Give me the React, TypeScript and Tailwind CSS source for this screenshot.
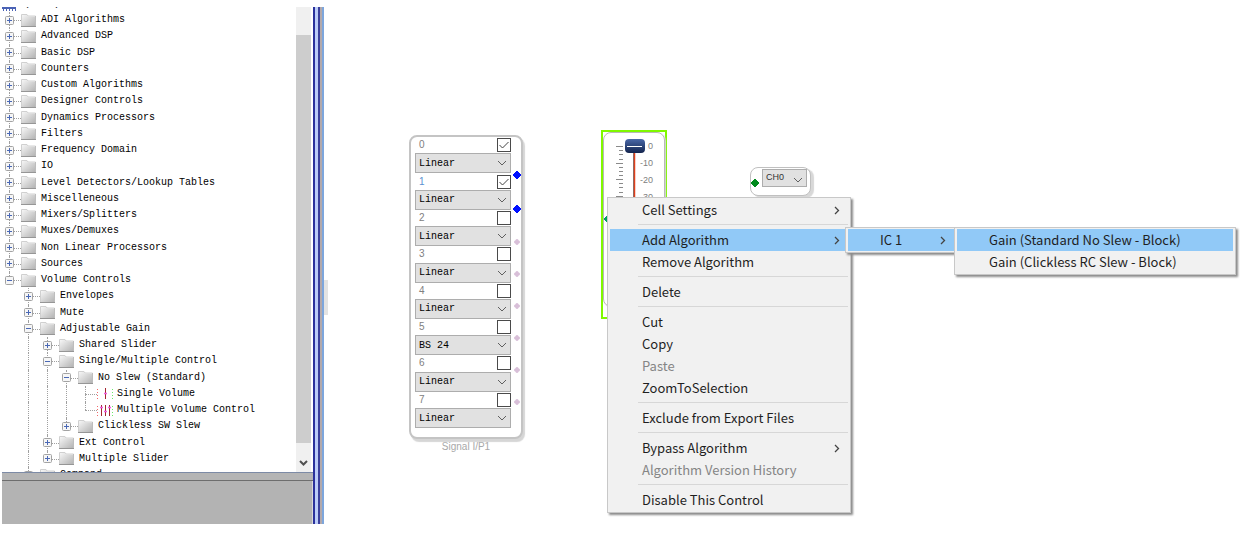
import { useState } from 'react';
import type { ReactNode } from 'react';

type TreeItem = {
  label: string;
  depth: number;
  open?: boolean;
  icon?: 'single' | 'multiple';
  // outer levels whose vertical line passes through this row
  guides?: number[];
  last?: boolean;
};

const items: TreeItem[] = [
  { label: 'ADI Algorithms', depth: 0 },
  { label: 'Advanced DSP', depth: 0 },
  { label: 'Basic DSP', depth: 0 },
  { label: 'Counters', depth: 0 },
  { label: 'Custom Algorithms', depth: 0 },
  { label: 'Designer Controls', depth: 0 },
  { label: 'Dynamics Processors', depth: 0 },
  { label: 'Filters', depth: 0 },
  { label: 'Frequency Domain', depth: 0 },
  { label: 'IO', depth: 0 },
  { label: 'Level Detectors/Lookup Tables', depth: 0 },
  { label: 'Miscelleneous', depth: 0 },
  { label: 'Mixers/Splitters', depth: 0 },
  { label: 'Muxes/Demuxes', depth: 0 },
  { label: 'Non Linear Processors', depth: 0 },
  { label: 'Sources', depth: 0 },
  { label: 'Volume Controls', depth: 0, open: true, last: true },
  { label: 'Envelopes', depth: 1 },
  { label: 'Mute', depth: 1 },
  { label: 'Adjustable Gain', depth: 1, open: true },
  { label: 'Shared Slider', depth: 2, guides: [1] },
  { label: 'Single/Multiple Control', depth: 2, open: true, guides: [1] },
  { label: 'No Slew (Standard)', depth: 3, open: true, guides: [1, 2] },
  { label: 'Single Volume', depth: 4, icon: 'single', guides: [1, 2, 3] },
  { label: 'Multiple Volume Control', depth: 4, icon: 'multiple', guides: [1, 2, 3], last: true },
  { label: 'Clickless SW Slew', depth: 3, guides: [1, 2], last: true },
  { label: 'Ext Control', depth: 2, guides: [1] },
  { label: 'Multiple Slider', depth: 2, guides: [1], last: true },
];

const channels = [
  { mode: 'Linear', on: true },
  { mode: 'Linear', on: true },
  { mode: 'Linear', on: false },
  { mode: 'Linear', on: false },
  { mode: 'Linear', on: false },
  { mode: 'BS 24', on: false },
  { mode: 'Linear', on: false },
  { mode: 'Linear', on: false },
];

const mono = "font-['Liberation_Mono',monospace]";

function Toggle({ open }: { open?: boolean }) {
  return (
    <svg width="9" height="9" viewBox="0 0 9 9" className="relative shrink-0">
      <rect x=".5" y=".5" width="8" height="8" rx="1" fill="#f6f6f6" stroke="#a3a3a3" />
      <path d={open ? 'M2 4.5h5' : 'M2 4.5h5M4.5 2v5'} stroke="#4a68b5" />
    </svg>
  );
}

function Folder() {
  return (
    <svg width="15" height="13" viewBox="0 0 15 13" className="shrink-0">
      <defs>
        <linearGradient id="folder" x1="0" y1="0" x2="1" y2="1">
          <stop offset="0" stopColor="#f6f6f6" />
          <stop offset="1" stopColor="#b4b4b4" />
        </linearGradient>
      </defs>
      <path d="M1 12V1h5l1 1.500h7V12z" fill="url(#folder)" />
      <path d="M.5 12V.500h5.500l1 1.500h7.500" fill="none" stroke="#d0d0d0" />
      <path d="M0 12.500h15" stroke="#969696" />
      <path d="M14.500 2v10" stroke="#bdbdbd" />
    </svg>
  );
}

function VolumeIcon({ kind }: { kind: 'single' | 'multiple' }) {
  return (
    <svg width="17" height="13" viewBox="0 0 17 13" className="shrink-0">
      <path d="M.5 2v10" stroke="#f26a6a" strokeDasharray="1 2" />
      <path d="M15.500 2v10" stroke="#6bea6b" strokeDasharray="1 2" />
      <path d={kind === 'single' ? 'M8.500 1v11' : 'M4.500 1v11M8.500 1v11M12.500 1v11'} stroke="#a3242f" />
      <path
        d={kind === 'single' ? 'M7 6.500h3' : 'M3 3.500h3M7 7.500h3M11 3.500h3'}
        stroke="#f05be0"
        strokeWidth="1.500"
      />
    </svg>
  );
}

function TreeRow({ item }: { item: TreeItem }) {
  return (
    <li className="flex items-stretch">
      {Array.from({ length: item.depth }, (_, i) => (
        <span key={i} className="flex w-[19px] shrink-0 justify-center">
          {item.guides?.includes(i) && <span className="border-l border-dotted border-[#a0a0a0]" />}
        </span>
      ))}
      <span className="relative flex w-[19px] shrink-0 items-center justify-center">
        <span
          className={`absolute left-[9px] top-0 border-l border-dotted border-[#a0a0a0] ${item.last ? 'h-1/2' : 'h-full'}`}
        />
        <span className="absolute left-[9px] top-1/2 w-3 border-t border-dotted border-[#a0a0a0]" />
        {!item.icon && <Toggle open={item.open} />}
      </span>
      <span className={`flex items-center whitespace-pre pl-0.5 ${item.icon ? 'gap-[3px]' : 'gap-[5px]'}`}>
        {item.icon ? <VolumeIcon kind={item.icon} /> : <Folder />}
        {item.label}
      </span>
    </li>
  );
}

function AlgorithmTree() {
  return (
    <aside className="mb-[10px] mt-[7px] ml-0.5 flex w-[322px] shrink-0">
      <div className="flex w-[311px] flex-col">
        <div className="flex h-[466px] overflow-hidden border-b border-[#7d8ba6]">
          <div className={`flex-1 overflow-hidden text-[10px] leading-4 text-black ${mono}`}>
            <div className="flex h-[5px] items-end overflow-hidden">
              <svg width="14" height="5" viewBox="0 0 14 5" className="shrink-0">
                <path d="M0 1h14" stroke="#4a62b5" strokeWidth="2" />
                <path d="M1.500 2v2M4.500 2v2M7.500 2v2M10.500 2v2M13.500 2v2" stroke="#4a62b5" />
              </svg>
              <span className="pl-2 whitespace-pre">(IC 1) ADAU 1452M/1452M</span>
            </div>
            <ul className="-ml-0.5 grid h-[455px] auto-rows-fr">
              {items.map((item) => (
                <TreeRow key={item.label} item={item} />
              ))}
            </ul>
            <ul className="pl-[17px]">
              <TreeRow item={{ label: 'Compand', depth: 0, open: true }} />
            </ul>
          </div>
          <div className="flex w-[15px] flex-col bg-[#f0f0f0]">
            <div className="mt-7 flex-1 bg-[#cdcdcd]" />
            <button aria-label="Scroll down" className="flex h-[29px] items-center justify-center pt-3">
              <svg width="9" height="7" viewBox="0 0 9 7">
                <path d="M1 1l3.500 3.500L8 1" fill="none" stroke="#505050" strokeWidth="2" />
              </svg>
            </button>
          </div>
          <div className="w-0.5 bg-white" />
        </div>
        <div className="h-2 border-b border-[#6e6e6e] bg-[#b5b5b5]" />
        <div className="flex-1 border-r border-[#d8d8d8] bg-[#b3b3b3]" />
      </div>
      <div className="w-[2px] bg-[#2a319c]" />
      <div className="w-[3px] bg-[#bccdf8]" />
      <div className="w-[2px] bg-[#3b3f9c]" />
      <div className="w-[2px] bg-[#b3a9ab]" />
      <div className="w-[2px] bg-[#7da6dc]" />
    </aside>
  );
}

function Chevron({ className = '' }: { className?: string }) {
  return (
    <svg width="10" height="6" viewBox="0 0 10 6" className={`pointer-events-none ${className}`}>
      <path d="M1 1l4 4 4-4" fill="none" stroke="#606060" />
    </svg>
  );
}

function Pin({ color, size = 8 }: { color: string; size?: number }) {
  return (
    <svg width={size} height={size} viewBox="0 0 8 8" className="block">
      <path d="M3 0h2v1h1v1h1v1h1v2H7v1H6v1H5v1H3V7H2V6H1V5H0V3h1V2h1V1h1z" fill={color} />
    </svg>
  );
}

function SignalInput() {
  const [checked, setChecked] = useState(channels.map((c) => c.on));
  return (
    <section className="absolute left-[85px] top-[135px] w-[114px]">
      <div className="relative rounded-lg border-2 border-[#c4c4c4] bg-white pb-[9px] pl-1 pr-[10px] shadow-[2px_3px_1px_#d6d6d6]">
        <div className="grid h-[291px] auto-rows-fr">
          {channels.map((c, i) => (
            <div key={i} className="flex flex-col">
              <div className="flex flex-1 items-center justify-between pl-1">
                <label
                  htmlFor={`channel-${i}`}
                  className={`font-['Liberation_Sans',sans-serif] text-[10px] leading-[14px] ${i === 1 ? 'text-[#5b8fd0]' : 'text-[#808080]'}`}
                >
                  {i}
                </label>
                <span className="relative h-[14px] w-[14px]">
                  <input
                    id={`channel-${i}`}
                    type="checkbox"
                    checked={checked[i]}
                    onChange={() => setChecked(checked.map((v, j) => (j === i ? !v : v)))}
                    className="block h-[14px] w-[14px] appearance-none border border-[#4a4a4a] bg-white"
                  />
                  {checked[i] && (
                    <svg viewBox="0 0 14 14" className="pointer-events-none absolute inset-0">
                      <path d="M2.500 7l3 3 6-6" fill="none" stroke="#444" />
                    </svg>
                  )}
                </span>
              </div>
              <div className="relative">
                <select
                  aria-label={`Format of channel ${i}`}
                  defaultValue={c.mode}
                  className={`block h-5 w-full appearance-none border border-[#adadad] bg-[#e1e1e1] pl-[3px] text-[10px] text-black ${mono}`}
                >
                  <option>Linear</option>
                  <option>BS 24</option>
                </select>
                <Chevron className="absolute right-1 top-[7px]" />
              </div>
            </div>
          ))}
        </div>
        <div className="absolute right-0 top-[34px] flex h-[234px] flex-col items-center justify-between">
          {channels.map((_, i) => (
            <Pin key={i} color={i < 2 ? '#0010ff' : '#d8bfd8'} size={i < 2 ? 8 : 6} />
          ))}
        </div>
      </div>
      <p className="text-center font-['Liberation_Sans',sans-serif] text-[10px] leading-4 text-[#a8a8a8]">
        Signal I/P1
      </p>
    </section>
  );
}

function GainSlider() {
  return (
    <section className="absolute left-[277px] top-[130px] h-[189px] w-[66px] border-2 border-[#80f800] bg-white">
      <div className="relative h-[175px] rounded-lg border border-[#b8b8b8] shadow-[1px_1px_1px_#d8d8d8]">
        <svg width="60" height="80" viewBox="0 0 60 80" className="absolute left-0 top-0">
          <path d="M12 13.500h7M12 30.500h7M12 46.500h7M12 63.500h7" stroke="#8a8a8a" />
          <path
            d="M15 17.500h4M15 21.500h4M15 26.500h4M15 34.500h4M15 38.500h4M15 42.500h4M15 50.500h4M15 54.500h4M15 59.500h4"
            stroke="#8a8a8a"
          />
          <path d="M29.500 18v62" stroke="#777" />
          <path d="M30.500 18v62" stroke="#e0401c" strokeWidth="1.500" />
          <defs>
            <linearGradient id="knob" x1="0" y1="0" x2="0" y2="1">
              <stop offset="0" stopColor="#4a68a8" />
              <stop offset="1" stopColor="#13244d" />
            </linearGradient>
          </defs>
          <rect x="21" y="6" width="20" height="14" rx="4" fill="url(#knob)" />
          <path d="M23 13.500h15" stroke="#fff" />
        </svg>
        <div className="absolute left-9 top-[5px] w-5 font-['Liberation_Sans',sans-serif] text-[9px] leading-[17px] text-[#808080]">
          <p className="pl-2">0</p>
          <p>-10</p>
          <p>-20</p>
          <p>-30</p>
        </div>
        <div className="absolute left-0 top-[82px]">
          <Pin color="#00a060" />
        </div>
      </div>
    </section>
  );
}

function ChannelOutput() {
  return (
    <section className="absolute left-[426px] top-[167px] flex h-[29px] w-[61px] items-start rounded-lg border border-[#c0c0c0] bg-white pt-px pr-[3px] shadow-[3px_2px_1px_#d8d8d8]">
      <div className="pt-[10px]">
        <Pin color="#008a1c" />
      </div>
      <div className="relative ml-[3px] flex-1">
        <select
          aria-label="Output channel"
          className="block h-[18px] w-full appearance-none border border-[#adadad] bg-[#e1e1e1] pl-[3px] font-['Liberation_Sans',sans-serif] text-[9px] text-[#333]"
        >
          <option>CH0</option>
          <option>CH1</option>
        </select>
        <Chevron className="absolute right-1 top-2" />
      </div>
    </section>
  );
}

function Menu({ className, children }: { className: string; children: ReactNode }) {
  return (
    <div
      role="menu"
      className={`absolute border border-[#c8c8c8] bg-[#f1f1f1] px-0.5 py-px font-['Noto_Sans_CJK_SC',sans-serif] text-[13px] text-[#1f1f1f] shadow-[2px_2px_2px_#8c8c8c] ${className}`}
    >
      {children}
    </div>
  );
}

type MenuItemProps = { label: string; sub?: boolean; active?: boolean; disabled?: boolean };

function MenuItem({ label, sub, active, disabled }: MenuItemProps) {
  return (
    <button
      role="menuitem"
      disabled={disabled}
      className={`flex h-[22px] w-full items-center justify-between pl-8 pr-2 whitespace-nowrap ${active ? 'bg-[#91c9f7]' : ''} ${disabled ? 'text-[#858585]' : ''}`}
    >
      {label}
      {sub && (
        <svg width="6" height="9" viewBox="0 0 6 9">
          <path d="M1 1l3.500 3.500L1 8" fill="none" stroke="#444" strokeWidth="1.300" />
        </svg>
      )}
    </button>
  );
}

function Separator() {
  return <div role="separator" className="my-[3px] ml-7 h-0.5 border-t border-[#d7d7d7]" />;
}

export default function App() {
  return (
    <div className="flex min-h-screen bg-white">
      <AlgorithmTree />
      <main className="relative flex-1 overflow-hidden">
        <div className="absolute left-0 top-[280px] h-[35px] w-1 bg-[#e3e3e3]" />
        <SignalInput />
        <GainSlider />
        <ChannelOutput />
        <Menu className="left-[283px] top-[197px] w-[244px]">
          <MenuItem label="Cell Settings" sub />
          <Separator />
          <MenuItem label="Add Algorithm" sub active />
          <MenuItem label="Remove Algorithm" />
          <Separator />
          <MenuItem label="Delete" />
          <Separator />
          <MenuItem label="Cut" />
          <MenuItem label="Copy" />
          <MenuItem label="Paste" disabled />
          <MenuItem label="ZoomToSelection" />
          <Separator />
          <MenuItem label="Exclude from Export Files" />
          <Separator />
          <MenuItem label="Bypass Algorithm" sub />
          <MenuItem label="Algorithm Version History" disabled />
          <Separator />
          <MenuItem label="Disable This Control" />
        </Menu>
        <Menu className="left-[521px] top-[227px] w-[112px]">
          <MenuItem label="IC 1" sub active />
        </Menu>
        <Menu className="left-[630px] top-[227px] w-[282px]">
          <MenuItem label="Gain (Standard No Slew - Block)" active />
          <MenuItem label="Gain (Clickless RC Slew - Block)" />
        </Menu>
      </main>
    </div>
  );
}
